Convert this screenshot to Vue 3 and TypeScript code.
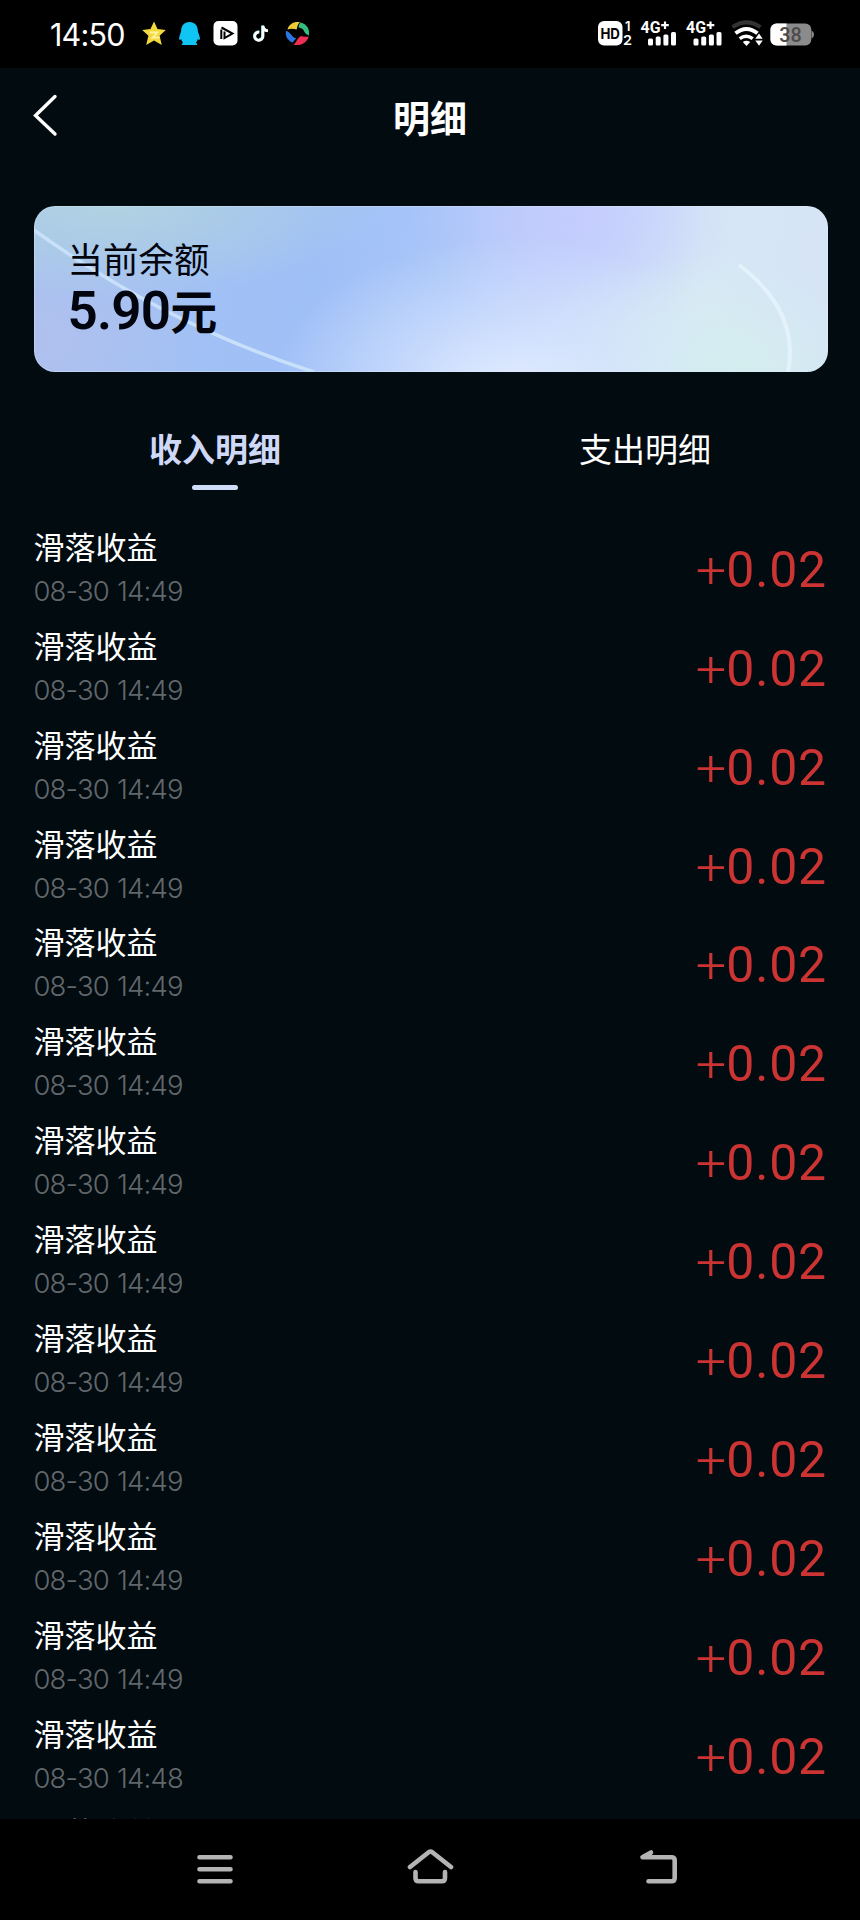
<script setup lang="ts">
import { ref } from 'vue'

interface RecordItem {
  title: string
  day: string
  time: string
  amount: string
}

const times: string[] = [...Array(12).fill('14:49'), '14:48', '14:48']
const records: RecordItem[] = times.map((time) => ({
  title: '滑落收益',
  day: '08-30',
  time,
  amount: '0.02',
}))

const tabs = ['收入明细', '支出明细']
const active = ref(0)
</script>

<template>
  <div class="screen">
    <header class="status">
      <span class="clock">14:50</span>
      <svg class="apps" width="170" height="28" viewBox="0 0 170 28">
        <path d="M12 .5l3.500 7.500 8.300 1-6.200 5.700 2.200 9.300-7.800-4.500-7.800 4.500 2.200-9.300L.2 9l8.300-1z" fill="#f2d83c" />
        <path d="M7.500 11.500h8l-5 5.200 7-.3" fill="none" stroke="#fff3a0" stroke-width="1.800" />
        <path d="M47.500 1c-5.300 0-8.300 3.800-8.300 8.600 0 1.700-1.500 4.200-2 6.800-.4 2.300.2 3.300 2 1.600.5 1.800 1 2.800 2 3.800-1.700.8-2 2.200-.6 2.200h13.800c1.400 0 1.100-1.400-.6-2.200 1-1 1.500-2 2-3.800 1.800 1.700 2.400.7 2-1.600-.5-2.600-2-5.100-2-6.800C55.800 4.800 52.800 1 47.500 1z" fill="#10c5f4" />
        <rect x="71.500" y="0" width="24" height="24.500" rx="5" fill="#fff" />
        <path d="M79.300 8.500v9.500M79.500 6.500l11 6-8 4.500v-6.500" fill="none" stroke="#000" stroke-width="2" />
        <path d="M120.500 4.500v10.300a4.100 4.100 0 1 1-3.600-3.900M120.500 4.500c.3 3 2 4.700 5 5" fill="none" stroke="#5ce0e0" stroke-width="2.800" />
        <path d="M121 4.800v10.300a4.100 4.100 0 1 1-3.600-3.900M121 4.800c.3 3 2 4.700 5 5" fill="none" stroke="#fff" stroke-width="2.800" />
        <path d="M145.500 8.500C147 2.500 153 0 158 1.300c-2.300 2-2.800 4.500-3.300 7.200-3.200-1-6.200-1.200-9.200 0z" fill="#ecca38" />
        <path d="M158.500 1.500c6.500 1.500 9.500 7 8.500 13-3-1-4.300-2.700-5.500-5.500-1.200-1.500-3-2.500-5-2.500.2-2 .8-3.500 2-5z" fill="#35bd7e" />
        <path d="M144 10c4 .5 5 4.500 8.700 7l1.800 0-4 4.500c-5-2-7.500-6.500-6.500-11.500z" fill="#2d76df" />
        <path d="M151.500 23.500c2.500-1.500 3-4.500 5.200-6.800l2.300-1.700c2 .8 5 .8 7.700.5-1.800 6.500-8.500 10-15.200 8z" fill="#ee2e54" />
      </svg>
      <svg class="signals" width="220" height="28" viewBox="0 0 220 28">
        <rect x="1" y="0" width="24.500" height="24.500" rx="6" fill="#fff" />
        <text x="13.200" y="17.800" class="hd" text-anchor="middle" textLength="19.500" lengthAdjust="spacingAndGlyphs">HD</text>
        <text x="28" y="9.500" class="sim">1</text>
        <text x="26" y="24" class="sim" textLength="9" lengthAdjust="spacingAndGlyphs">2</text>
        <g v-for="x in [0, 45.500]" :key="x" :transform="`translate(${x} 0)`">
          <text x="43.500" y="12" class="net" textLength="20" lengthAdjust="spacingAndGlyphs">4G</text>
          <path d="M68 .5v7.500M64.200 4.200h7.600" stroke="#fff" stroke-width="2.200" />
          <rect x="51" y="17.500" width="5" height="7" rx="1.500" fill="#fff" />
          <rect x="58.700" y="15.500" width="5" height="9" rx="1.500" fill="#fff" />
          <rect x="66.400" y="13.500" width="5" height="11" rx="1.500" fill="#fff" />
          <rect x="74" y="11" width="5" height="13.500" rx="1.500" fill="#fff" />
        </g>
        <path d="M135.500 6.200Q149.500-3.500 163.500 6.200" fill="none" stroke="#333" stroke-width="4" />
        <path d="M138.500 12.200q11-8.500 22 0" fill="none" stroke="#fff" stroke-width="3.800" />
        <path d="M142.700 17.700q6.500-5 13 0" fill="none" stroke="#fff" stroke-width="3.400" />
        <path d="M145.800 21q3.700-2.600 7.400 0l-3.700 4z" fill="#fff" />
        <path d="M158.300 17.700l3.700-5.200 3.700 5.200zM158.300 19.500l3.700 5.200 3.700-5.200z" fill="#fff" />
        <rect x="173.300" y="2.500" width="41" height="22" rx="6" fill="#8b8b8b" />
        <path d="M189.500 2.500h-10a6 6 0 0 0-6 6v10a6 6 0 0 0 6 6h10z" fill="#fff" />
        <path d="M214.500 9.500q2.500 1 2.500 4t-2.500 4z" fill="#8b8b8b" />
        <text x="193.500" y="20.500" class="pct" text-anchor="middle" textLength="22.500" lengthAdjust="spacingAndGlyphs">38</text>
      </svg>
    </header>

    <nav class="title-bar">
      <svg class="back" width="28" height="44" viewBox="0 0 28 44">
        <path d="M24 2.500L4.500 21.500l19.500 18.500" fill="none" stroke="#fff" stroke-width="3.400" stroke-linecap="round" />
      </svg>
      <h1>明细</h1>
    </nav>

    <section class="balance">
      <svg class="arcs" width="794" height="166" viewBox="0 0 794 166" fill="none">
        <path d="M0 24Q130 118 280 166" stroke="#c8e0fa" stroke-width="3.500" />
        <path d="M705 59Q766 105 754 166" stroke="#e4f2fb" stroke-width="4" />
      </svg>
      <div class="label">当前余额</div>
      <div class="value">5.90<span>元</span></div>
    </section>

    <div class="tabs">
      <button v-for="(tab, i) in tabs" :key="tab" class="tab" :class="{ active: active === i }" @click="active = i">
        {{ tab }}
      </button>
    </div>

    <main class="list">
      <article v-for="(item, i) in records" :key="i" class="row">
        <div>
          <div class="name">{{ item.title }}</div>
          <div class="date"><span>{{ item.day }}</span><span>{{ item.time }}</span></div>
        </div>
        <div class="amount"><span class="sign">+</span>{{ item.amount }}</div>
      </article>
    </main>

    <footer class="system-nav">
      <svg width="48" height="44" viewBox="0 0 48 44">
        <path d="M9.500 10.200h31M9.500 22.200h31M9.500 34.200h31" />
      </svg>
      <svg width="48" height="44" viewBox="0 0 48 44">
        <path d="M4 20L23 5q1.500-1 3 0l19 15M9.500 25v6q0 3.200 3.200 3.200h23.100q3.200 0 3.200-3.200v-6" />
      </svg>
      <svg width="48" height="44" viewBox="0 0 48 44">
        <path d="M16 5.500L7.500 10.200h29q3.200 0 3.200 3.200v17.600q0 3.200-3.200 3.200H13.500" />
        <path class="tip" d="M16 5.500L7.500 10.200H16z" />
      </svg>
    </footer>
  </div>
</template>

<style>
body {
  margin: 0;
  background: #000;
}
</style>

<style scoped>
.screen {
  width: 860px;
  height: 1920px;
  display: flex;
  flex-direction: column;
  overflow: hidden;
  background: #010b10;
  color: #fff;
  font-family: Roboto, "Noto Sans CJK SC", sans-serif;
}

.status {
  flex: none;
  box-sizing: border-box;
  height: 68px;
  padding: 2px 43px 0 50px;
  display: flex;
  align-items: center;
  background: #000;
}

.status svg {
  overflow: visible;
}

.clock {
  width: 92px;
  font: 400 30.500px/36px Inter, sans-serif;
  letter-spacing: -0.8px;
}

.signals {
  margin-left: auto;
}

.hd {
  font: 700 14.500px Inter, sans-serif;
  fill: #000;
}

.sim {
  font: 600 13px Inter, sans-serif;
  fill: #fff;
}

.net {
  font: 700 16.500px Roboto, sans-serif;
  fill: #fff;
}

.pct {
  font: 500 20px Roboto, sans-serif;
  fill: #4b4b4b;
}

.title-bar {
  flex: none;
  height: 137px;
  display: grid;
  grid-template-columns: 1fr auto 1fr;
  align-items: start;
}

.back {
  margin: 26px 0 0 31px;
}

h1 {
  margin: 22px 0 0;
  font: 700 37px/54px "Noto Sans CJK SC", sans-serif;
}

.balance {
  position: relative;
  flex: none;
  box-sizing: border-box;
  width: 794px;
  height: 166px;
  margin: 0.5px 0 0 33.500px;
  padding: 29px 34px;
  border-radius: 21px;
  overflow: hidden;
  box-shadow: inset 0 0 0 1px rgba(230, 240, 250, 0.35);
  color: #02040e;
  background:
    radial-gradient(ellipse 240px 150px at 60% 110%, #e0ebff 0%, rgba(214, 228, 255, 0.65) 45%, rgba(208, 224, 255, 0) 100%),
    radial-gradient(ellipse 220px 130px at 84% 100%, #d3efed 0%, rgba(211, 240, 238, 0) 90%),
    radial-gradient(ellipse 170px 110px at 68% 8%, rgba(196, 202, 255, 0.8) 0%, rgba(196, 202, 255, 0) 100%),
    radial-gradient(ellipse 280px 90px at 10% 0%, #b0d2e0 0%, rgba(176, 210, 224, 0) 100%),
    radial-gradient(ellipse 170px 110px at 0% 80%, #b0c0ee 0%, rgba(176, 192, 238, 0) 100%),
    linear-gradient(100deg, #a6c3f0 0%, #9fbff7 35%, #a9c6f8 52%, #c6d6fa 68%, #d8e7f6 82%, #d5e3f6 100%);
}

.arcs {
  position: absolute;
  inset: 0;
}

.label {
  position: relative;
  font: 400 35.500px/46px "Noto Sans CJK SC", sans-serif;
}

.value {
  position: relative;
  display: flex;
  align-items: center;
  padding-top: 3px;
  font-size: 53px;
  font-weight: 600;
  line-height: 54px;
  letter-spacing: -0.8px;
}

.value span {
  margin-top: -4px;
  font: 700 47px/54px "Noto Sans CJK SC", sans-serif;
}

.tabs {
  flex: none;
  height: 144px;
  display: flex;
}

.tab {
  flex: 1;
  display: flex;
  flex-direction: column;
  align-items: center;
  padding: 51px 0 0;
  border: 0;
  background: none;
  color: #fff;
  font: 400 33px/50px "Noto Sans CJK SC", sans-serif;
}

.tab.active {
  color: #d0d8f8;
  font-weight: 700;
}

.tab.active::after {
  content: "";
  width: 46px;
  height: 5px;
  margin-top: 12px;
  border-radius: 3px;
  background: #cfdcf5;
}

.list {
  flex: 1;
  min-height: 0;
  overflow: hidden;
  padding: 7.200px 33px 0 33.400px;
}

.row {
  height: 98.950px;
  display: flex;
  justify-content: space-between;
}

.name {
  font: 400 31px/46px "Noto Sans CJK SC", sans-serif;
}

.date {
  display: flex;
  gap: 8px;
  margin-top: 4px;
  color: #62676b;
  font: 350 27.500px/36px Inter, sans-serif;
  letter-spacing: -0.8px;
}

.amount {
  padding-top: 17px;
  color: #cc3433;
  font-size: 50px;
  line-height: 60px;
  font-weight: 400;
  letter-spacing: 0.8px;
}

.sign {
  display: inline-block;
  font-weight: 350;
  transform: scaleX(1.080);
}

.system-nav {
  flex: none;
  box-sizing: border-box;
  height: 101px;
  padding: 28px 177px 0 190px;
  display: grid;
  grid-template-columns: 216px 1fr auto;
  align-items: start;
  background: #000;
}

.system-nav path {
  fill: none;
  stroke: #b4b4b4;
  stroke-width: 4.600;
  stroke-linecap: round;
  stroke-linejoin: round;
}

.system-nav .tip {
  fill: #b4b4b4;
  stroke-width: 2;
}
</style>
